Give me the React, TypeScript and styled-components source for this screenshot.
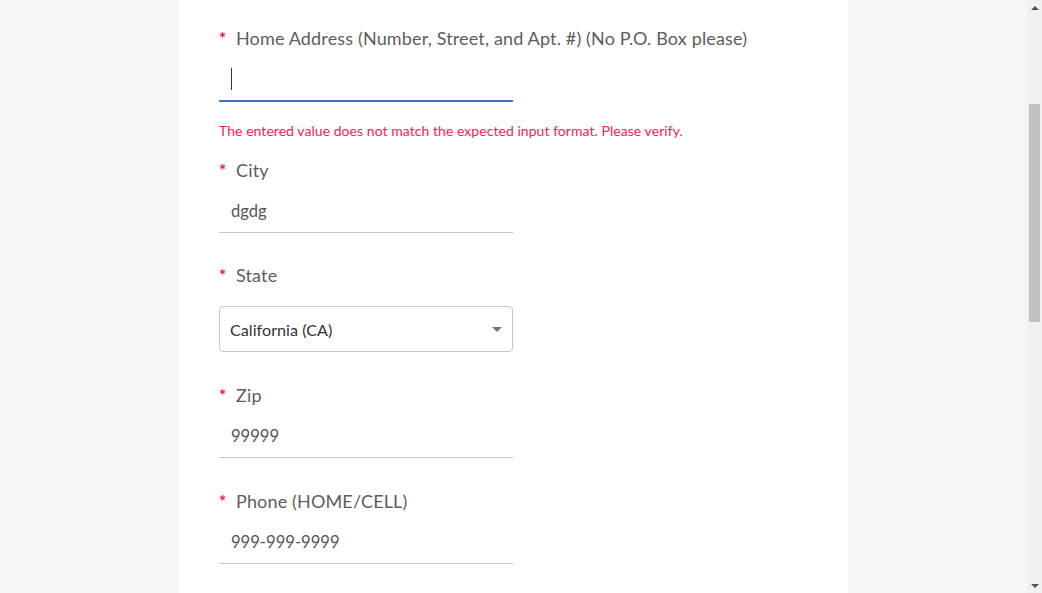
import React from "react";
import styled, { createGlobalStyle } from "styled-components";

const Global = createGlobalStyle`
  html, body { margin: 0; padding: 0; height: 100%; overflow: hidden; }
  body { font-family: Lato, "Liberation Sans", sans-serif; background: #f5f5f5; }
  #root { height: 100%; }
`;

const Page = styled.div`
  display: flex;
  height: 593px;
  width: 1042px;
`;

const Main = styled.div`
  flex: 1;
  display: flex;
  justify-content: center;
  background: #f5f5f5;
  overflow: hidden;
`;

const Panel = styled.div`
  width: 669px;
  background: #ffffff;
  padding: 26px 40px 0 40px;
  box-sizing: border-box;
  display: flex;
  flex-direction: column;
`;

const Field = styled.div<{ $gap?: number }>`
  display: flex;
  flex-direction: column;
  margin-bottom: ${(p) => p.$gap ?? 30}px;
`;

const Label = styled.label<{ $mb?: number }>`
  display: flex;
  align-items: flex-start;
  height: 24px;
  line-height: 24px;
  font-size: 18px;
  letter-spacing: 0.15px;
  color: #5d5d5d;
  margin-bottom: ${(p) => p.$mb ?? 7}px;
  white-space: nowrap;
`;

const Star = styled.span`
  color: #f0134f;
  font-size: 17px;
  font-weight: 700;
  line-height: 20px;
  width: 17px;
  padding-top: 3px;
  flex: none;
`;

const Input = styled.div<{ $focused?: boolean }>`
  width: 294px;
  height: 44px;
  box-sizing: border-box;
  padding: 0 12px;
  display: flex;
  align-items: center;
  font-size: 16.6px;
  color: #555;
  border-bottom: ${(p) => (p.$focused ? "2px solid #3f74c2" : "1px solid #c8c8cc")};
`;

const Caret = styled.span`
  display: block;
  width: 1px;
  height: 22px;
  background: #333;
  margin-top: -1px;
`;

const ErrorText = styled.div`
  font-size: 14px;
  line-height: 18px;
  letter-spacing: 0.05px;
  color: #ff1a52;
  margin-top: 20px;
  white-space: nowrap;
`;

const Select = styled.div`
  width: 294px;
  height: 46px;
  box-sizing: border-box;
  border: 1px solid #c6c6c6;
  border-radius: 4px;
  display: flex;
  align-items: center;
  justify-content: space-between;
  padding: 0 10px 0 10px;
  font-size: 16.2px;
  color: #333;
`;

const Arrow = styled.span`
  width: 0;
  height: 0;
  border-left: 5px solid transparent;
  border-right: 5px solid transparent;
  border-top: 5px solid #777;
  margin-top: 1px;
`;

const Scrollbar = styled.div`
  width: 15px;
  flex: none;
  background: #f1f1f1;
  display: flex;
  flex-direction: column;
  align-items: center;
`;

const ScrollBtn = styled.div`
  height: 15px;
  width: 15px;
  display: flex;
  align-items: center;
  justify-content: center;
  flex: none;
`;

const UpTri = styled.span`
  width: 0;
  height: 0;
  border-left: 4px solid transparent;
  border-right: 4px solid transparent;
  border-bottom: 4px solid #505050;
`;

const DownTri = styled.span`
  width: 0;
  height: 0;
  border-left: 4px solid transparent;
  border-right: 4px solid transparent;
  border-top: 4px solid #505050;
`;

const Track = styled.div`
  flex: 1;
  width: 15px;
  display: flex;
  flex-direction: column;
  align-items: center;
`;

const Thumb = styled.div`
  width: 11px;
  height: 218px;
  margin-top: 89px;
  background: #c1c1c1;
`;

export default function App() {
  return (
    <>
      <Global />
      <Page>
        <Main>
          <Panel>
            <Field $gap={18}>
              <Label $mb={8}>
                <Star>*</Star>Home Address (Number, Street, and Apt. #) (No P.O. Box please)
              </Label>
              <Input $focused>
                <Caret />
              </Input>
              <ErrorText>The entered value does not match the expected input format. Please verify.</ErrorText>
            </Field>
            <Field>
              <Label>
                <Star>*</Star>City
              </Label>
              <Input>dgdg</Input>
            </Field>
            <Field $gap={31}>
              <Label $mb={19}>
                <Star>*</Star>State
              </Label>
              <Select>
                <span>California (CA)</span>
                <Arrow />
              </Select>
            </Field>
            <Field $gap={31}>
              <Label>
                <Star>*</Star>Zip
              </Label>
              <Input>99999</Input>
            </Field>
            <Field>
              <Label>
                <Star>*</Star>Phone (HOME/CELL)
              </Label>
              <Input>999-999-9999</Input>
            </Field>
          </Panel>
        </Main>
        <Scrollbar>
          <ScrollBtn>
            <UpTri />
          </ScrollBtn>
          <Track>
            <Thumb />
          </Track>
          <ScrollBtn>
            <DownTri />
          </ScrollBtn>
        </Scrollbar>
      </Page>
    </>
  );
}
